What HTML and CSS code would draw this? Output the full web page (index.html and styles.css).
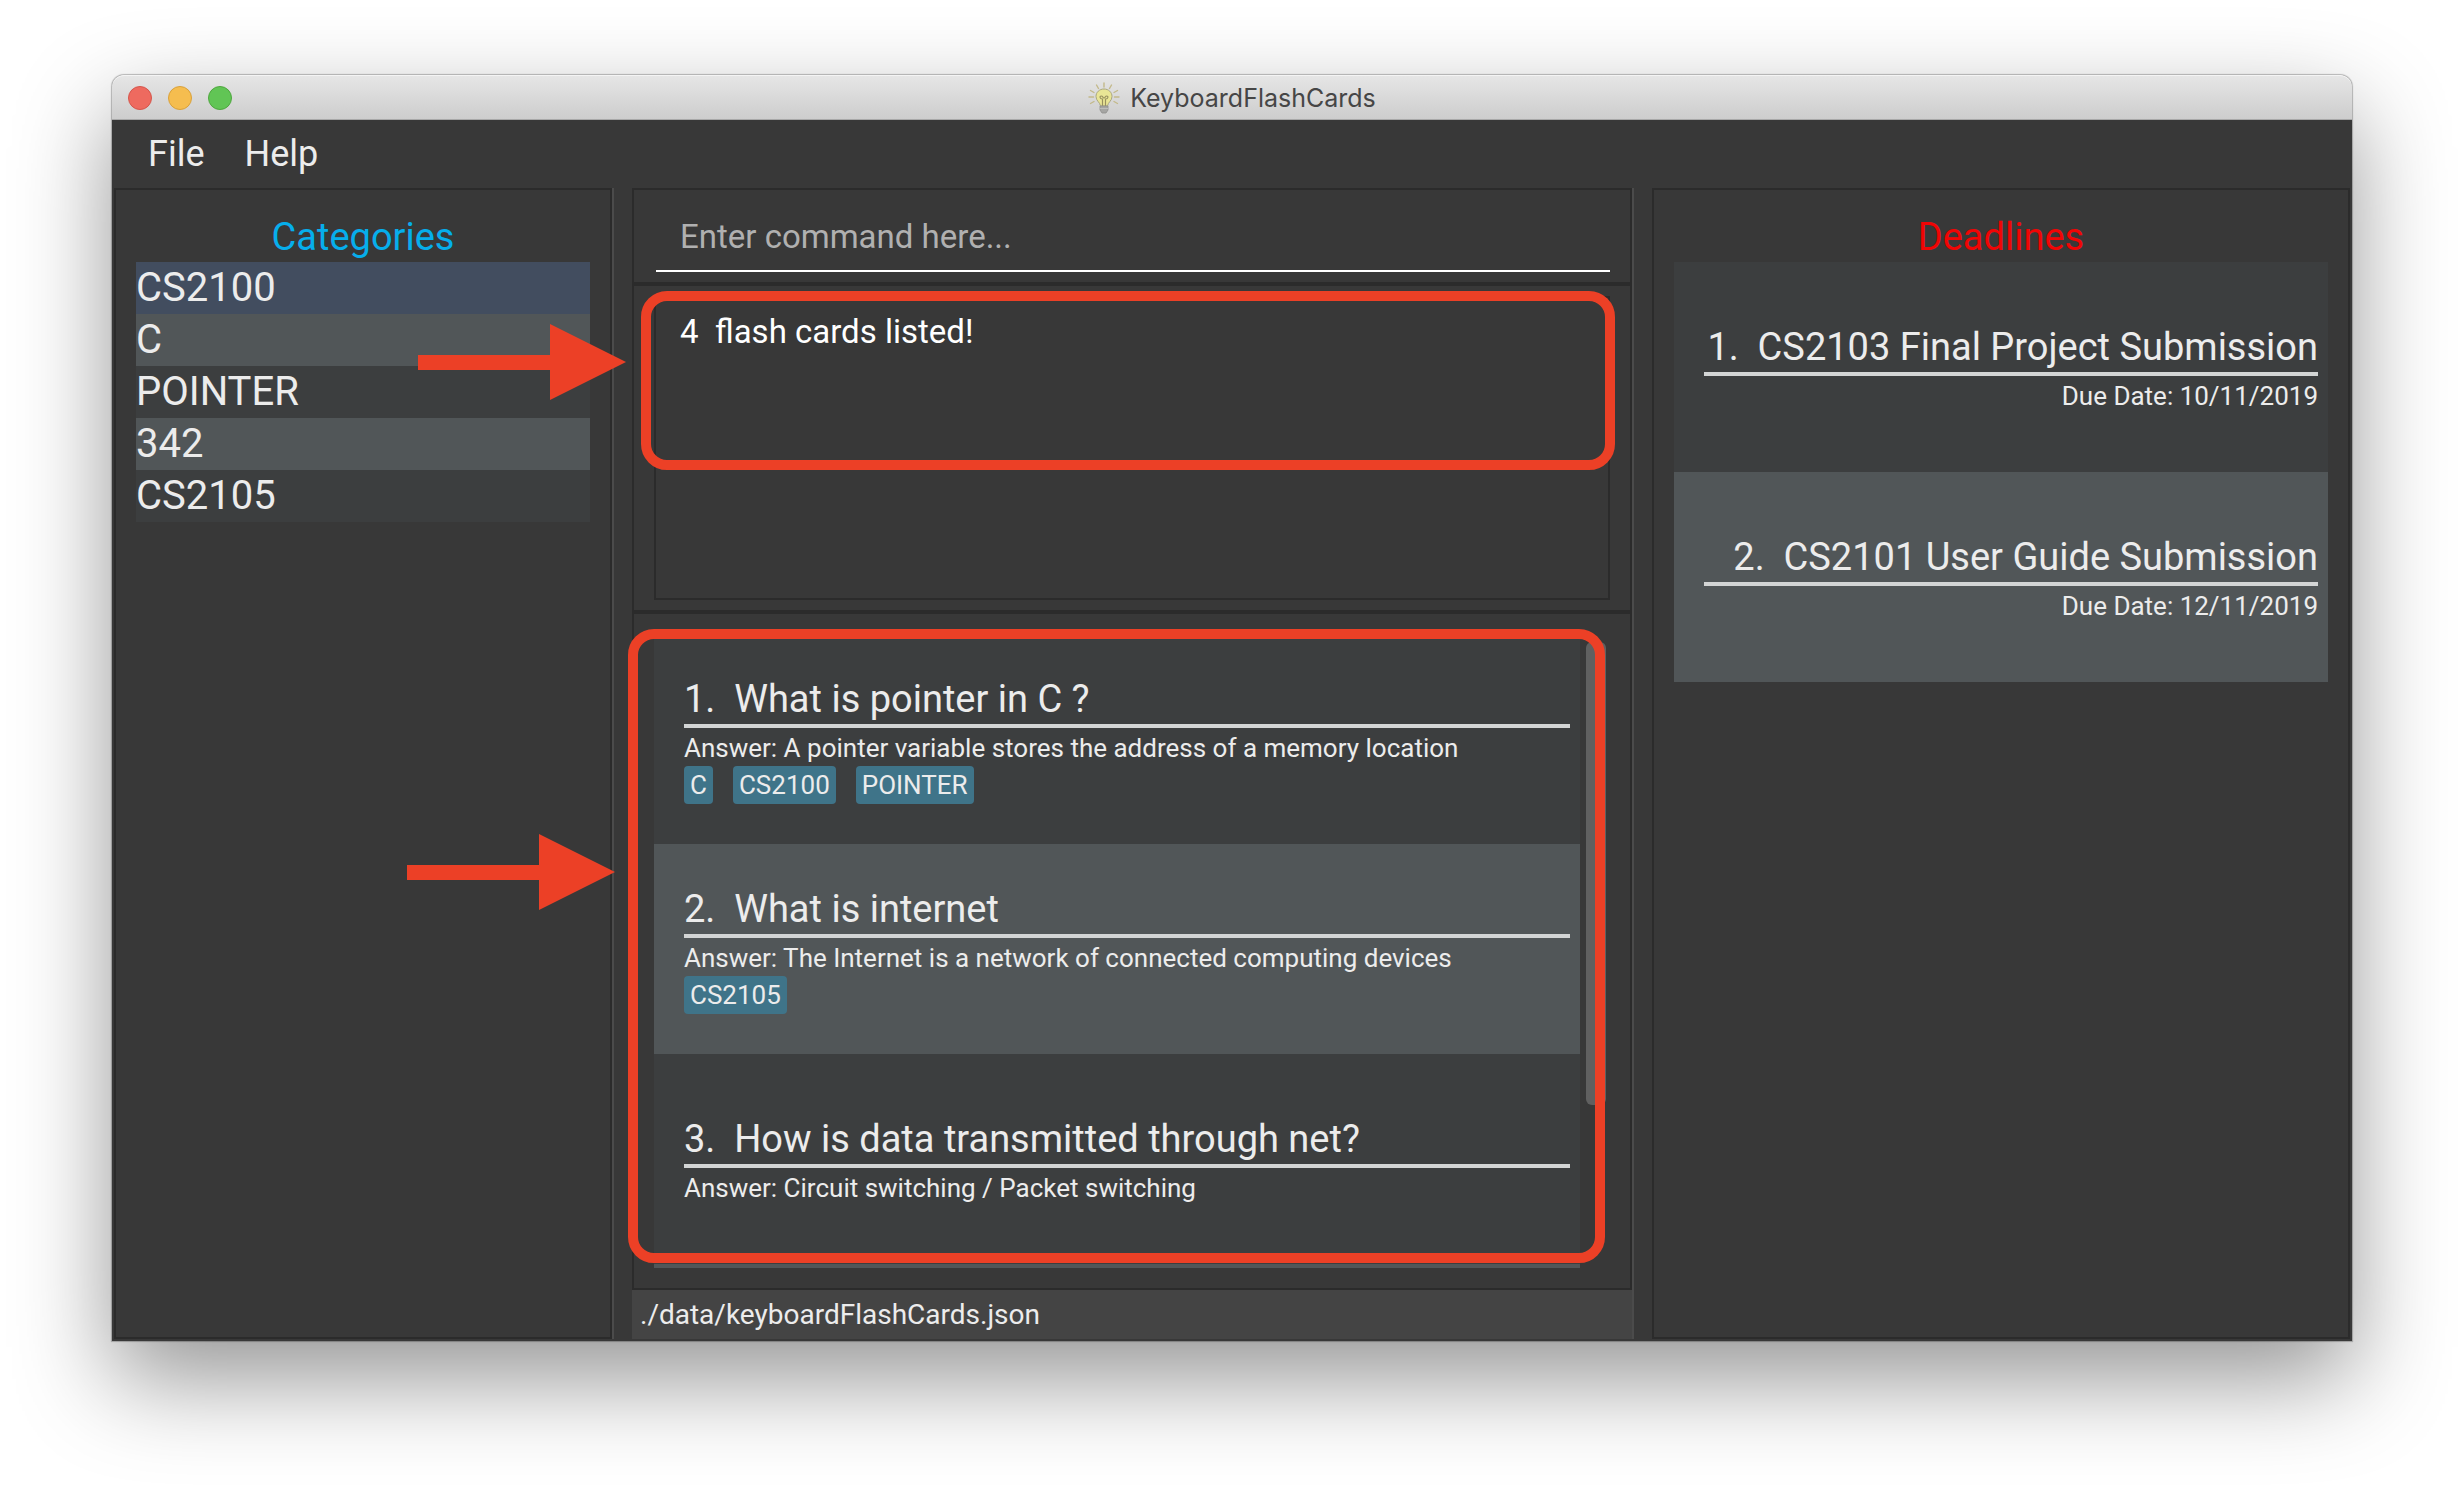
FILE: index.html
```html
<!DOCTYPE html>
<html lang="en">
<head>
<meta charset="utf-8">
<title>KeyboardFlashCards</title>
<link rel="stylesheet" href="styles.css">
</head>
<body>
<main class="window">
  <header class="titlebar">
    <div class="lights">
      <button class="light light-close" type="button" aria-label="Close"></button>
      <button class="light light-minimise" type="button" aria-label="Minimise"></button>
      <button class="light light-zoom" type="button" aria-label="Zoom"></button>
    </div>
    <svg class="bulb" viewBox="0 0 32 32" aria-hidden="true">
      <g fill="none" stroke="#c3b98a" stroke-width="1.4" stroke-linecap="round">
        <path d="M16 1v4M8.500 3l2 3.500M23.500 3l-2 3.500M2.500 8.500l3.500 2M29.500 8.500l-3.500 2M1 15h4.500M31 15h-4.500M2.500 21.500l3.500-2M29.500 21.500l-3.500-2"/>
      </g>
      <path d="M16 7c-4.600 0-8 3.300-8 7.500 0 4.500 4 5.500 4.500 9.500h7c.5-4 4.500-5 4.500-9.500C24 10.300 20.600 7 16 7z" fill="#e9e595" stroke="#aaa77f" stroke-width="1"/>
      <path d="M14.500 24v-7.500M17.500 24v-7.500M14.500 17c-3 0-3-3-1.200-3s1.200 2 2.700 2 1-2 2.700-2 1.800 3-1.200 3" fill="none" stroke="#98905f" stroke-width="1.200"/>
      <path d="M12 24h8v4l-2 3h-4l-2-3z" fill="#a5a5a3" stroke="#8f8f8d" stroke-width=".8"/>
      <path d="M12 26.500h8" stroke="#c4c4c2" stroke-width=".8"/>
    </svg>
    <h1 class="app-name">KeyboardFlashCards</h1>
  </header>

  <nav class="menubar">
    <button class="menu" type="button">File</button>
    <button class="menu" type="button">Help</button>
  </nav>

  <div class="columns">
    <section class="column">
      <div class="panel side">
        <h2 class="heading heading-categories">Categories</h2>
        <ul class="categories">
          <li class="category selected">CS2100</li>
          <li class="category">C</li>
          <li class="category">POINTER</li>
          <li class="category">342</li>
          <li class="category">CS2105</li>
        </ul>
      </div>
    </section>

    <section class="column">
      <div class="panel command">
        <input class="command-box" type="text" placeholder="Enter command here..." aria-label="Command">
      </div>
      <div class="panel result">
        <textarea class="result-box" readonly aria-label="Result">4  flash cards listed!</textarea>
        <div class="callout callout-result"></div>
        <svg class="arrow arrow-result" viewBox="0 0 208 76" aria-hidden="true"><path d="M0 31h132V0l76 38-76 38V46H0z"/></svg>
      </div>
      <div class="panel results">
        <div class="scroller">
          <ol class="cards">
            <li class="card">
              <h3 class="card-title">1.  What is pointer in C ?</h3>
              <p class="card-text">Answer: A pointer variable stores the address of a memory location</p>
              <div class="tags"><span class="tag">C</span><span class="tag">CS2100</span><span class="tag">POINTER</span></div>
            </li>
            <li class="card">
              <h3 class="card-title">2.  What is internet</h3>
              <p class="card-text">Answer: The Internet is a network of connected computing devices</p>
              <div class="tags"><span class="tag">CS2105</span></div>
            </li>
            <li class="card">
              <h3 class="card-title">3.  How is data transmitted through net?</h3>
              <p class="card-text">Answer: Circuit switching / Packet switching</p>
            </li>
            <li class="card"></li>
          </ol>
          <div class="track"><div class="thumb"></div></div>
        </div>
        <div class="callout callout-list"></div>
        <svg class="arrow arrow-list" viewBox="0 0 208 76" aria-hidden="true"><path d="M0 31h132V0l76 38-76 38V46H0z"/></svg>
      </div>
      <footer class="status">./data/keyboardFlashCards.json</footer>
    </section>

    <section class="column">
      <div class="panel side">
        <h2 class="heading heading-deadlines">Deadlines</h2>
        <ol class="deadlines">
          <li class="card">
            <h3 class="card-title">1.  CS2103 Final Project Submission</h3>
            <p class="card-text">Due Date: 10/11/2019</p>
          </li>
          <li class="card">
            <h3 class="card-title">2.  CS2101 User Guide Submission</h3>
            <p class="card-text">Due Date: 12/11/2019</p>
          </li>
        </ol>
      </div>
    </section>
  </div>
</main>
</body>
</html>
```
FILE: styles.css
```css
:root {
  --base: #383838;
  --edge: #2b2b2b;
  --row-even: #515658;
  --row-odd: #3c3e3f;
  --mark: #ec4026;
  --text: #ececec;
}

* { box-sizing: border-box; }

body {
  margin: 0;
  height: 100vh;
  padding: 75px 112px 149px;
  background: #fff;
  color: var(--text);
  font-family: Roboto, "Liberation Sans", sans-serif;
  font-size: 26px;
}

h1, h2, h3, p, ul, ol { margin: 0; padding: 0; font-weight: 400; }
ul, ol { list-style: none; }
button, input, textarea { font: inherit; color: inherit; border: 0; padding: 0; background: none; }

.window {
  display: flex;
  flex-direction: column;
  height: 100%;
  border-radius: 12px 12px 0 0;
  background: var(--base);
  box-shadow: 0 0 1px 1px rgba(0, 0, 0, .25), 0 38px 96px rgba(0, 0, 0, .42);
}

/* Title bar */
.titlebar {
  position: relative;
  display: flex;
  align-items: center;
  justify-content: center;
  gap: 10px;
  height: 45px;
  padding-top: 2px;
  border-bottom: 1px solid #a8a8a8;
  border-radius: 12px 12px 0 0;
  background: linear-gradient(#e6e6e6, #cdcdcd);
  box-shadow: inset 0 1px #f4f4f4;
}
.lights { position: absolute; left: 16px; display: flex; gap: 16px; }
.light { width: 24px; height: 24px; border-radius: 50%; }
.light-close { background: #ee6a5f; border: 1px solid #d5564c; }
.light-minimise { background: #f5bd4f; border: 1px solid #d9a13b; }
.light-zoom { background: #61c555; border: 1px solid #4fa73f; }
.bulb { width: 32px; height: 32px; }
.app-name { color: #464646; font-family: Inter, sans-serif; font-size: 25px; }

/* Menu bar */
.menubar { display: flex; gap: 40px; height: 68px; padding: 0 36px; }
.menu { font-size: 36px; }

/* Columns */
.columns {
  flex: 1;
  display: grid;
  grid-template-columns: 500fr 1002fr 698fr;
  gap: 18px;
  min-height: 0;
  padding: 0 2px 2px;
}
.column { display: flex; flex-direction: column; min-width: 0; min-height: 0; }
.column:not(:last-child) { border-right: 2px solid #4b4b4b; }
.panel { position: relative; border: 2px solid var(--edge); }
.side { flex: 1; padding: 22px 20px 20px; }

.heading { font-size: 38px; line-height: 50px; text-align: center; }
.heading-categories { color: #06aeec; }
.heading-deadlines { color: #f00505; }

.category { font-size: 40px; line-height: 52px; background: var(--row-odd); }
.category:nth-child(even) { background: var(--row-even); }
.category.selected { background: #424d5f; }

/* Command and result */
.command { padding: 12px 20px 10px 22px; }
.command-box {
  display: block;
  width: 100%;
  height: 70px;
  padding: 0 24px;
  border-bottom: 2px solid #fff;
  font-size: 33px;
}
.command-box::placeholder { color: #b0b0b0; }
.result { padding: 10px 20px; }
.result-box {
  display: block;
  width: 100%;
  height: 304px;
  padding: 14px 24px;
  border: 2px solid var(--edge);
  color: #fff;
  font-size: 33px;
  line-height: 40px;
  resize: none;
}

/* Cards */
.results { flex: 1; display: flex; min-height: 0; padding: 20px; }
.scroller { flex: 1; display: flex; min-height: 0; overflow: hidden; }
.cards { flex: 1; }
.card {
  display: flex;
  flex-direction: column;
  justify-content: center;
  height: 210px;
  padding: 0 10px 0 30px;
  background: var(--row-odd);
}
.card:nth-child(even) { background: var(--row-even); }
.card-title {
  margin-bottom: 4px;
  border-bottom: 4px solid #d3d5d5;
  font-size: 38px;
  line-height: 50px;
  white-space: pre;
}
.card-text { line-height: 32px; }
.tags { display: flex; gap: 20px; padding-top: 2px; }
.tag { padding: 0 6px; border-radius: 4px; background: #3f7489; line-height: 38px; }
.track { width: 30px; padding: 8px 4px 0 6px; }
.thumb { height: 74%; border-radius: 6px; background: #606060; }
.deadlines { text-align: right; }

.status { padding: 0 8px; background: #444; font-size: 28px; line-height: 49px; }

/* Highlight marks drawn over the window */
.callout { position: absolute; border: 10px solid var(--mark); border-radius: 26px; pointer-events: none; }
.callout-result { inset: 5px 15px 140px 7px; }
.callout-list { inset: 15px 25px 25px -6px; }
.arrow { position: absolute; width: 208px; height: 76px; fill: var(--mark); pointer-events: none; }
.arrow-result { left: -216px; top: 38px; }
.arrow-list { left: -227px; top: 220px; }
```
